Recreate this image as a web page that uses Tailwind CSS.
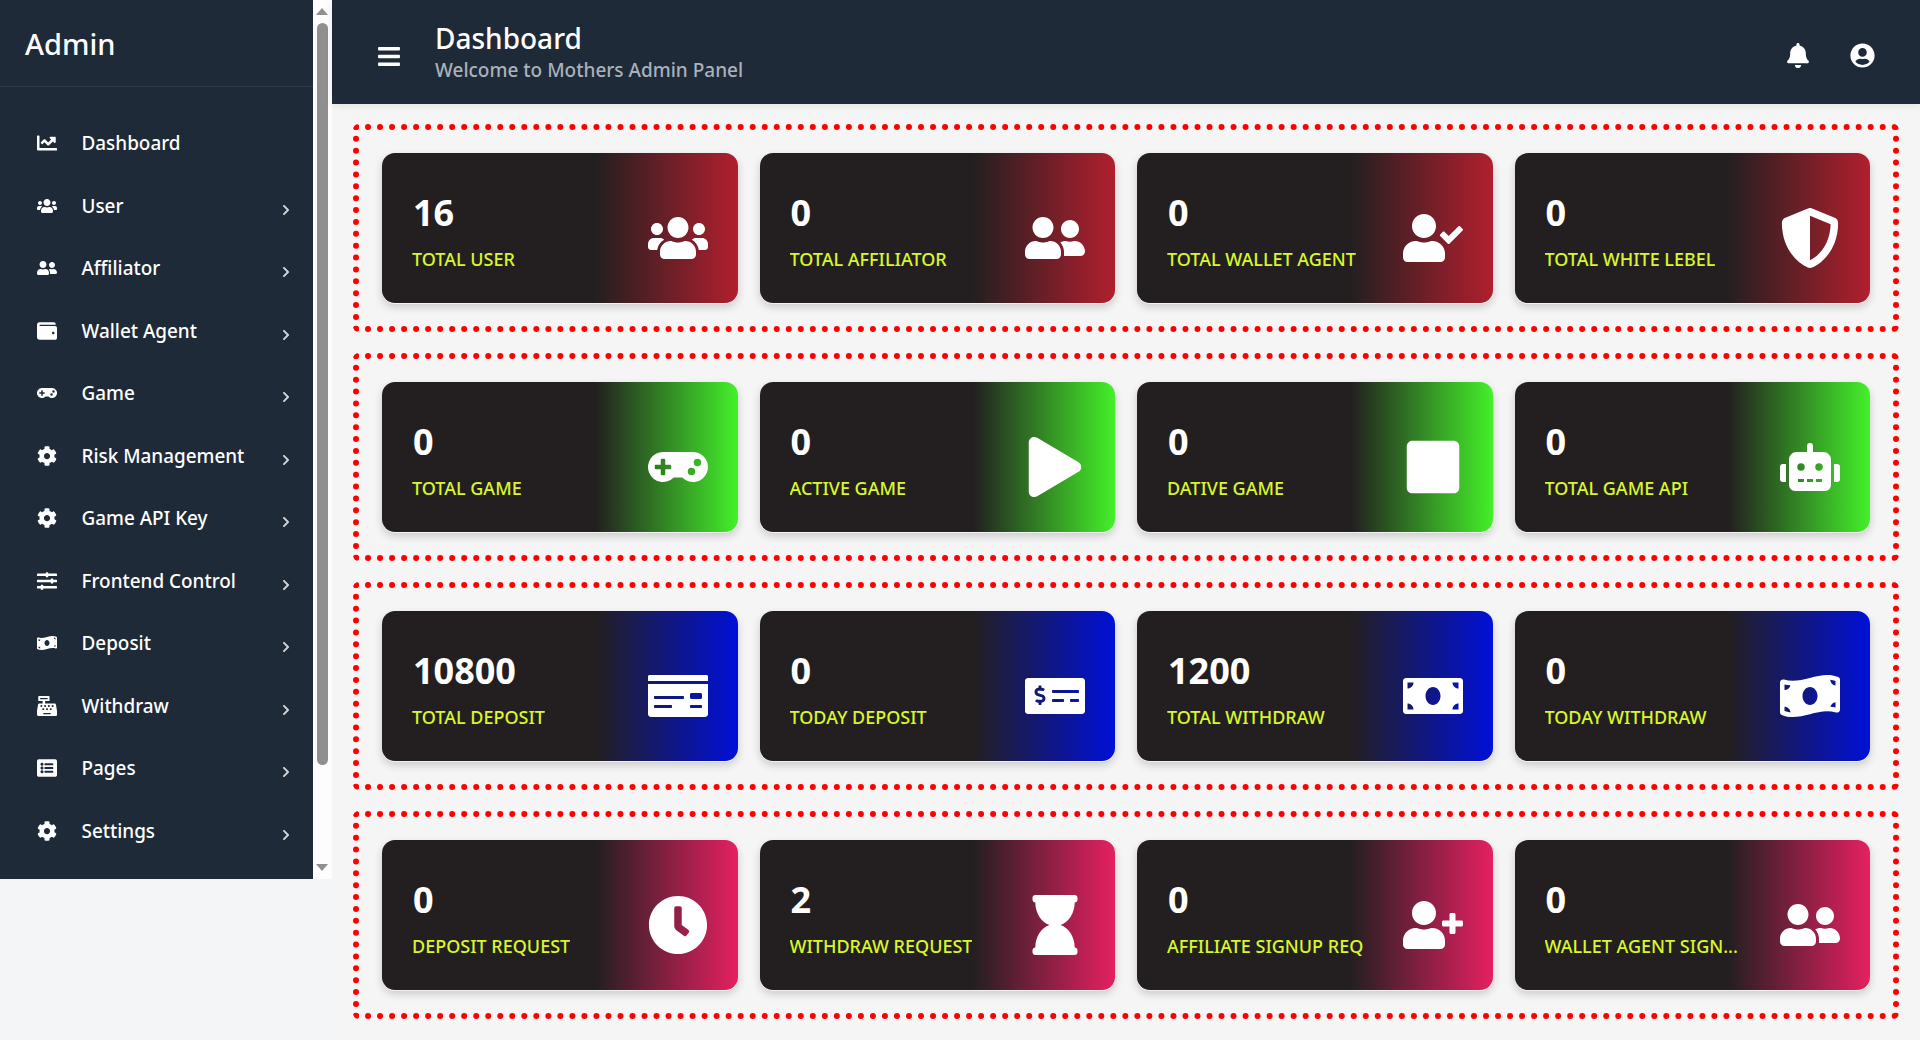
<!DOCTYPE html>
<html lang="en">
<head>
    <meta charset="UTF-8">
    <meta name="viewport" content="width=device-width, initial-scale=1.0">
    <title>Admin Dashboard</title>
    <script src="https://cdn.jsdelivr.net/npm/@tailwindcss/browser@4"></script>
</head>
<body class="bg-[#f4f5f7] font-['Noto_Sans',sans-serif] h-[1040px] overflow-hidden flex">
    <!-- Icon sprites -->
    <svg class="hidden" xmlns="http://www.w3.org/2000/svg">
        <symbol id="i-users" viewBox="0 0 640 512"><path d="M96 224c35.3 0 64-28.7 64-64s-28.7-64-64-64-64 28.7-64 64 28.7 64 64 64zm448 0c35.3 0 64-28.7 64-64s-28.7-64-64-64-64 28.7-64 64 28.7 64 64 64zm32 32h-64c-17.6 0-33.5 7.1-45.1 18.6 40.3 22.1 68.9 62 75.1 109.4h66c17.7 0 32-14.3 32-32v-32c0-35.3-28.7-64-64-64zm-256 0c61.9 0 112-50.1 112-112S381.9 32 320 32 208 82.1 208 144s50.1 112 112 112zm76.8 32h-8.3c-20.8 10-43.9 16-68.5 16s-47.6-6-68.5-16h-8.3C179.6 288 128 339.6 128 403.2V432c0 26.5 21.5 48 48 48h288c26.5 0 48-21.5 48-48v-28.8c0-63.6-51.6-115.2-115.2-115.2zm-223.7-13.4C161.5 263.1 145.6 256 128 256H64c-35.3 0-64 28.7-64 64v32c0 17.7 14.3 32 32 32h65.9c6.3-47.4 34.9-87.3 75.2-109.4z"/></symbol>
        <symbol id="i-friends" viewBox="0 0 640 512"><path d="M192 256c61.9 0 112-50.1 112-112S253.9 32 192 32 80 82.1 80 144s50.1 112 112 112zm76.8 32h-8.3c-20.8 10-43.9 16-68.5 16s-47.6-6-68.5-16h-8.3C51.6 288 0 339.6 0 403.2V432c0 26.5 21.5 48 48 48h288c26.5 0 48-21.5 48-48v-28.8c0-63.6-51.6-115.2-115.2-115.2zM480 256c53 0 96-43 96-96s-43-96-96-96-96 43-96 96 43 96 96 96zm48 32h-3.8c-13.9 4.8-28.6 8-44.2 8s-30.3-3.2-44.2-8H432c-20.4 0-39.2 5.9-55.7 15.4 24.4 26.3 39.7 61.2 39.7 99.8v38.4c0 2.2-.5 4.3-.6 6.4H592c26.5 0 48-21.5 48-48 0-61.9-50.1-112-112-112z"/></symbol>
        <symbol id="i-user-check" viewBox="0 0 640 512"><path d="M224 256c70.7 0 128-57.3 128-128S294.7 0 224 0 96 57.3 96 128s57.3 128 128 128zm89.6 32h-16.7c-22.2 10.2-46.9 16-72.9 16s-50.6-5.8-72.9-16h-16.7C60.2 288 0 348.2 0 422.4V464c0 26.5 21.5 48 48 48h352c26.5 0 48-21.5 48-48v-41.6c0-74.2-60.2-134.4-134.4-134.4zm323-128.4l-27.8-28.1c-4.6-4.7-12.1-4.7-16.8-.1l-104.8 104-45.5-45.8c-4.6-4.7-12.1-4.7-16.8-.1l-28.1 27.9c-4.7 4.6-4.7 12.1-.1 16.8l81.7 82.3c4.6 4.7 12.1 4.7 16.8.1l141.3-140.2c4.6-4.7 4.7-12.2.1-16.8z"/></symbol>
        <symbol id="i-user-plus" viewBox="0 0 640 512"><path d="M624 208h-64v-64c0-8.8-7.2-16-16-16h-32c-8.8 0-16 7.2-16 16v64h-64c-8.8 0-16 7.2-16 16v32c0 8.8 7.2 16 16 16h64v64c0 8.8 7.2 16 16 16h32c8.8 0 16-7.2 16-16v-64h64c8.8 0 16-7.2 16-16v-32c0-8.8-7.2-16-16-16zm-400 48c70.7 0 128-57.3 128-128S294.7 0 224 0 96 57.3 96 128s57.3 128 128 128zm89.6 32h-16.7c-22.2 10.2-46.9 16-72.9 16s-50.6-5.8-72.9-16h-16.7C60.2 288 0 348.2 0 422.4V464c0 26.5 21.5 48 48 48h352c26.5 0 48-21.5 48-48v-41.6c0-74.2-60.2-134.4-134.4-134.4z"/></symbol>
        <symbol id="i-shield" viewBox="0 0 512 512"><path d="M466.5 83.7l-192-80a48.15 48.15 0 0 0-36.9 0l-192 80C27.7 91.1 16 108.6 16 128c0 198.5 114.5 335.7 221.5 380.3 11.8 4.9 25.1 4.9 36.9 0C360.1 472.6 496 349.3 496 128c0-19.4-11.7-36.9-29.5-44.3zM256.1 446.3l-.1-381 175.9 73.3c-3.3 151.4-82.1 261.1-175.8 307.7z"/></symbol>
        <symbol id="i-gamepad" viewBox="0 0 640 512"><path d="M480.07 96H160a160 160 0 1 0 114.24 272h91.52A160 160 0 1 0 480.07 96zM248 268a12 12 0 0 1-12 12h-52v52a12 12 0 0 1-12 12h-24a12 12 0 0 1-12-12v-52H84a12 12 0 0 1-12-12v-24a12 12 0 0 1 12-12h52v-52a12 12 0 0 1 12-12h24a12 12 0 0 1 12 12v52h52a12 12 0 0 1 12 12zm216 76a40 40 0 1 1 40-40 40 40 0 0 1-40 40zm64-96a40 40 0 1 1 40-40 40 40 0 0 1-40 40z"/></symbol>
        <symbol id="i-play" viewBox="0 0 448 512"><path d="M424.4 214.7L72.4 6.6C43.8-10.3 0 6.1 0 47.9V464c0 37.5 40.7 60.1 72.4 41.3l352-208c31.4-18.5 31.5-64.1 0-82.6z"/></symbol>
        <symbol id="i-stop" viewBox="0 0 448 512"><path d="M400 32H48C21.5 32 0 53.5 0 80v352c0 26.5 21.5 48 48 48h352c26.5 0 48-21.5 48-48V80c0-26.5-21.5-48-48-48z"/></symbol>
        <symbol id="i-robot" viewBox="0 0 640 512"><path d="M32,224H64V416H32A31.96166,31.96166,0,0,1,0,384V256A31.96166,31.96166,0,0,1,32,224Zm512-48V448a64.06328,64.06328,0,0,1-64,64H160a64.06328,64.06328,0,0,1-64-64V176a79.974,79.974,0,0,1,80-80H288V32a32,32,0,0,1,64,0V96H464A79.974,79.974,0,0,1,544,176ZM264,256a40,40,0,1,0-40,40A39.997,39.997,0,0,0,264,256Zm-8,128H192v32h64Zm96,0H288v32h64ZM456,256a40,40,0,1,0-40,40A39.997,39.997,0,0,0,456,256Zm-8,128H384v32h64ZM640,256V384a31.96166,31.96166,0,0,1-32,32H576V224h32A31.96166,31.96166,0,0,1,640,256Z"/></symbol>
        <symbol id="i-money-check" viewBox="0 0 640 512"><path d="M0 448c0 17.67 14.33 32 32 32h576c17.67 0 32-14.33 32-32V128H0v320zm448-208c0-8.84 7.16-16 16-16h96c8.84 0 16 7.16 16 16v32c0 8.84-7.16 16-16 16h-96c-8.84 0-16-7.16-16-16v-32zm0 120c0-4.42 3.58-8 8-8h112c4.42 0 8 3.58 8 8v16c0 4.42-3.58 8-8 8H456c-4.42 0-8-3.58-8-8v-16zM64 264c0-4.42 3.58-8 8-8h304c4.42 0 8 3.58 8 8v16c0 4.42-3.58 8-8 8H72c-4.42 0-8-3.58-8-8v-16zm0 96c0-4.42 3.58-8 8-8h176c4.42 0 8 3.58 8 8v16c0 4.42-3.58 8-8 8H72c-4.42 0-8-3.58-8-8v-16zM624 32H16C7.16 32 0 39.16 0 48v48h640V48c0-8.84-7.16-16-16-16z"/></symbol>
        <symbol id="i-money-check-alt" viewBox="0 0 640 512"><path d="M608 64H32C14.33 64 0 78.33 0 96v320c0 17.67 14.33 32 32 32h576c17.67 0 32-14.33 32-32V96c0-17.67-14.33-32-32-32zM176 327.88V344c0 4.42-3.58 8-8 8h-16c-4.42 0-8-3.58-8-8v-16.29c-11.29-.58-22.27-4.52-31.37-11.35-3.9-2.93-4.1-8.77-.57-12.14l11.75-11.21c2.77-2.64 6.89-2.76 10.13-.73 3.87 2.42 8.26 3.72 12.82 3.72h28.11c6.5 0 11.8-5.92 11.8-13.19 0-5.95-3.61-11.19-8.77-12.73l-45-13.5c-18.59-5.58-31.58-23.42-31.58-43.39 0-24.52 19.05-44.44 42.67-45.07V152c0-4.42 3.58-8 8-8h16c4.42 0 8 3.58 8 8v16.29c11.29.58 22.27 4.51 31.37 11.35 3.9 2.93 4.1 8.77.57 12.14l-11.75 11.21c-2.77 2.64-6.89 2.76-10.13.73-3.87-2.43-8.26-3.72-12.82-3.72h-28.11c-6.5 0-11.8 5.92-11.8 13.19 0 5.95 3.61 11.19 8.77 12.73l45 13.5c18.59 5.58 31.58 23.42 31.58 43.39 0 24.53-19.05 44.44-42.67 45.07zM416 312c0 4.42-3.58 8-8 8H296c-4.42 0-8-3.58-8-8v-16c0-4.42 3.58-8 8-8h112c4.42 0 8 3.58 8 8v16zm160 0c0 4.42-3.58 8-8 8h-80c-4.42 0-8-3.58-8-8v-16c0-4.42 3.58-8 8-8h80c4.42 0 8 3.58 8 8v16zm0-96c0 4.42-3.58 8-8 8H296c-4.42 0-8-3.58-8-8v-16c0-4.42 3.58-8 8-8h272c4.42 0 8 3.58 8 8v16z"/></symbol>
        <symbol id="i-bill" viewBox="0 0 640 512"><path d="M608 64H32C14.33 64 0 78.33 0 96v320c0 17.67 14.33 32 32 32h576c17.67 0 32-14.33 32-32V96c0-17.67-14.33-32-32-32zM48 400v-64c35.35 0 64 28.65 64 64H48zm0-224v-64h64c0 35.35-28.65 64-64 64zm272 176c-44.19 0-80-42.99-80-96 0-53.02 35.82-96 80-96s80 42.98 80 96c0 53.03-35.83 96-80 96zm272 48h-64c0-35.35 28.65-64 64-64v64zm0-224c-35.35 0-64-28.65-64-64h64v64z"/></symbol>
        <symbol id="i-bill-wave" viewBox="0 0 640 512"><path d="M621.16 54.46C582.37 38.19 543.55 32 504.75 32c-123.17-.01-246.33 62.34-369.5 62.34-30.89 0-61.76-3.92-92.65-13.72-3.47-1.1-6.95-1.62-10.35-1.62C15.04 79 0 92.32 0 110.81v317.26c0 12.63 7.23 24.6 18.84 29.46C57.63 473.81 96.45 480 135.25 480c123.17 0 246.34-62.35 369.51-62.35 30.89 0 61.76 3.92 92.65 13.72 3.47 1.1 6.95 1.62 10.35 1.62 17.21 0 32.25-13.32 32.25-31.81V83.93c-.01-12.64-7.24-24.6-18.85-29.47zM48 132.22c20.12 5.04 41.12 7.57 62.72 8.93C104.84 170.54 79 192.69 48 192.69v-60.47zm0 285v-47.78c34.37 0 62.18 27.27 63.71 61.4-22.53-1.81-43.59-6.31-63.71-13.62zM320 352c-44.19 0-80-42.99-80-96 0-53.02 35.82-96 80-96s80 42.98 80 96c0 53.03-35.83 96-80 96zm272 27.78c-17.52-4.39-35.71-6.85-54.32-8.44 5.87-26.08 27.5-45.88 54.32-49.28v57.72zm0-236.11c-30.89-3.91-54.86-29.7-55.81-61.55 19.54 2.17 38.09 6.23 55.81 12.66v48.89z"/></symbol>
        <symbol id="i-clock" viewBox="0 0 512 512"><path d="M256,8C119,8,8,119,8,256S119,504,256,504,504,393,504,256,393,8,256,8Zm92.49,313h0l-20,25a16,16,0,0,1-22.49,2.5h0l-67-49.72a40,40,0,0,1-15-31.23V112a16,16,0,0,1,16-16h32a16,16,0,0,1,16,16V256l58,42.5A16,16,0,0,1,348.49,321Z"/></symbol>
        <symbol id="i-hourglass" viewBox="0 0 384 512"><path d="M360 0H24C10.745 0 0 10.745 0 24v16c0 13.255 10.745 24 24 24 0 90.965 51.016 167.734 120.842 192C74.016 280.266 24 357.035 24 448c-13.255 0-24 10.745-24 24v16c0 13.255 10.745 24 24 24h336c13.255 0 24-10.745 24-24v-16c0-13.255-10.745-24-24-24 0-90.965-51.016-167.734-120.842-192C308.984 231.734 360 154.965 360 64c13.255 0 24-10.745 24-24V24c0-13.255-10.745-24-24-24z"/></symbol>
        <symbol id="i-chart" viewBox="0 0 512 512"><path d="M496 384H64V80c0-8.84-7.16-16-16-16H16C7.16 64 0 71.16 0 80v336c0 17.67 14.33 32 32 32h464c8.84 0 16-7.16 16-16v-32c0-8.84-7.16-16-16-16zM464 96H345.94c-21.38 0-32.09 25.85-16.97 40.97l32.4 32.4L288 242.75l-73.37-73.37c-12.5-12.5-32.76-12.5-45.25 0l-68.69 68.69c-6.25 6.25-6.25 16.38 0 22.63l22.62 22.62c6.25 6.25 16.38 6.25 22.63 0L192 237.25l73.37 73.37c12.5 12.5 32.76 12.5 45.25 0l96-96 32.4 32.4c15.12 15.12 40.97 4.41 40.97-16.97V112c.01-8.84-7.15-16-15.99-16z"/></symbol>
        <symbol id="i-wallet" viewBox="0 0 512 512"><path d="M461.2 128H80c-8.84 0-16-7.16-16-16s7.16-16 16-16h384c8.84 0 16-7.16 16-16 0-26.51-21.49-48-48-48H64C28.65 32 0 60.65 0 96v320c0 35.35 28.65 64 64 64h397.2c28.02 0 50.8-21.53 50.8-48V176c0-26.47-22.78-48-50.8-48zM416 336c-17.67 0-32-14.33-32-32s14.33-32 32-32 32 14.33 32 32-14.33 32-32 32z"/></symbol>
        <symbol id="i-cog" viewBox="0 0 512 512"><path d="M487.4 315.7l-42.6-24.6c4.3-23.2 4.3-47 0-70.2l42.6-24.6c4.9-2.8 7.1-8.6 5.5-14-11.1-35.6-30-67.8-54.7-94.6-3.8-4.1-10-5.1-14.8-2.3L380.8 110c-17.9-15.4-38.5-27.3-60.8-35.1V25.8c0-5.6-3.9-10.5-9.4-11.7-36.7-8.2-74.3-7.8-109.2 0-5.5 1.2-9.4 6.1-9.4 11.7V75c-22.2 7.9-42.8 19.8-60.8 35.1L88.7 85.5c-4.9-2.8-11-1.9-14.8 2.3-24.7 26.7-43.6 58.9-54.7 94.6-1.7 5.4.6 11.2 5.5 14L67.3 221c-4.3 23.2-4.3 47 0 70.2l-42.6 24.6c-4.9 2.8-7.1 8.6-5.5 14 11.1 35.6 30 67.8 54.7 94.6 3.8 4.1 10 5.1 14.8 2.3l42.6-24.6c17.9 15.4 38.5 27.3 60.8 35.1v49.2c0 5.6 3.9 10.5 9.4 11.7 36.7 8.2 74.3 7.8 109.2 0 5.5-1.2 9.4-6.1 9.4-11.7v-49.2c22.2-7.9 42.8-19.8 60.8-35.1l42.6 24.6c4.9 2.8 11 1.9 14.8-2.3 24.7-26.7 43.6-58.9 54.7-94.6 1.5-5.5-.7-11.3-5.6-14.1zM256 336c-44.1 0-80-35.9-80-80s35.9-80 80-80 80 35.9 80 80-35.9 80-80 80z"/></symbol>
        <symbol id="i-sliders" viewBox="0 0 512 512"><path d="M496 384H160v-16c0-8.8-7.2-16-16-16h-32c-8.8 0-16 7.2-16 16v16H16c-8.8 0-16 7.2-16 16v32c0 8.8 7.2 16 16 16h80v16c0 8.8 7.2 16 16 16h32c8.8 0 16-7.2 16-16v-16h336c8.8 0 16-7.2 16-16v-32c0-8.8-7.2-16-16-16zm0-160h-80v-16c0-8.8-7.2-16-16-16h-32c-8.8 0-16 7.2-16 16v16H16c-8.8 0-16 7.2-16 16v32c0 8.8 7.2 16 16 16h336v16c0 8.8 7.2 16 16 16h32c8.8 0 16-7.2 16-16v-16h80c8.8 0 16-7.2 16-16v-32c0-8.8-7.2-16-16-16zm0-160H288V48c0-8.8-7.2-16-16-16h-32c-8.8 0-16 7.2-16 16v16H16C7.2 64 0 71.2 0 80v32c0 8.8 7.2 16 16 16h208v16c0 8.8 7.2 16 16 16h32c8.8 0 16-7.2 16-16v-16h208c8.8 0 16-7.2 16-16V80c0-8.8-7.2-16-16-16z"/></symbol>
        <symbol id="i-register" viewBox="0 0 512 512"><path d="M511.1 378.8l-26.7-160c-2.6-15.4-15.9-26.7-31.6-26.7H208v-64h96c8.8 0 16-7.2 16-16V16c0-8.8-7.2-16-16-16H48c-8.8 0-16 7.2-16 16v96c0 8.8 7.2 16 16 16h96v64H59.1c-15.6 0-29 11.3-31.6 26.7L.8 378.7c-.6 3.5-.9 7-.9 10.5V480c0 17.7 14.3 32 32 32h448c17.7 0 32-14.3 32-32v-90.7c.1-3.5-.2-7-.8-10.5zM280 248c0-8.8 7.2-16 16-16h16c8.8 0 16 7.2 16 16v16c0 8.8-7.2 16-16 16h-16c-8.8 0-16-7.2-16-16v-16zm-32 64h16c8.8 0 16 7.2 16 16v16c0 8.8-7.2 16-16 16h-16c-8.8 0-16-7.2-16-16v-16c0-8.8 7.2-16 16-16zm-32-80c8.8 0 16 7.2 16 16v16c0 8.8-7.2 16-16 16h-16c-8.8 0-16-7.2-16-16v-16c0-8.8 7.2-16 16-16h16zM80 80V48h192v32H80zm40 200h-16c-8.8 0-16-7.2-16-16v-16c0-8.8 7.2-16 16-16h16c8.8 0 16 7.2 16 16v16c0 8.8-7.2 16-16 16zm16 64v-16c0-8.8 7.2-16 16-16h16c8.8 0 16 7.2 16 16v16c0 8.8-7.2 16-16 16h-16c-8.8 0-16-7.2-16-16zm216 112c0 4.4-3.6 8-8 8H168c-4.4 0-8-3.6-8-8v-16c0-4.4 3.6-8 8-8h176c4.4 0 8 3.6 8 8v16zm24-112c0 8.8-7.2 16-16 16h-16c-8.8 0-16-7.2-16-16v-16c0-8.8 7.2-16 16-16h16c8.8 0 16 7.2 16 16v16zm48-80c0 8.8-7.2 16-16 16h-16c-8.8 0-16-7.2-16-16v-16c0-8.8 7.2-16 16-16h16c8.8 0 16 7.2 16 16v16z"/></symbol>
        <symbol id="i-list" viewBox="0 0 512 512"><path d="M464 480H48c-26.51 0-48-21.49-48-48V80c0-26.51 21.49-48 48-48h416c26.51 0 48 21.49 48 48v352c0 26.51-21.49 48-48 48zM128 120c-22.091 0-40 17.909-40 40s17.909 40 40 40 40-17.909 40-40-17.909-40-40-40zm0 96c-22.091 0-40 17.909-40 40s17.909 40 40 40 40-17.909 40-40-17.909-40-40-40zm0 96c-22.091 0-40 17.909-40 40s17.909 40 40 40 40-17.909 40-40-17.909-40-40-40zm288-136v-32c0-6.627-5.373-12-12-12H204c-6.627 0-12 5.373-12 12v32c0 6.627 5.373 12 12 12h200c6.627 0 12-5.373 12-12zm0 96v-32c0-6.627-5.373-12-12-12H204c-6.627 0-12 5.373-12 12v32c0 6.627 5.373 12 12 12h200c6.627 0 12-5.373 12-12zm0 96v-32c0-6.627-5.373-12-12-12H204c-6.627 0-12 5.373-12 12v32c0 6.627 5.373 12 12 12h200c6.627 0 12-5.373 12-12z"/></symbol>
        <symbol id="i-bell" viewBox="0 0 448 512"><path d="M224 512c35.32 0 63.97-28.65 63.97-64H160.03c0 35.35 28.65 64 63.97 64zm215.39-149.71c-19.32-20.76-55.47-51.99-55.47-154.29 0-77.7-54.48-139.9-127.94-155.16V32c0-17.67-14.32-32-31.98-32s-31.98 14.33-31.98 32v20.84C118.56 68.1 64.08 130.3 64.08 208c0 102.3-36.15 133.53-55.47 154.29-6 6.45-8.66 14.16-8.61 21.71.11 16.4 12.98 32 32.1 32h383.8c19.12 0 32-15.6 32.1-32 .05-7.55-2.61-15.27-8.61-21.71z"/></symbol>
        <symbol id="i-user-circle" viewBox="0 0 496 512"><path d="M248 8C111 8 0 119 0 256s111 248 248 248 248-111 248-248S385 8 248 8zm0 96c48.6 0 88 39.4 88 88s-39.4 88-88 88-88-39.4-88-88 39.4-88 88-88zm0 344c-58.7 0-111.3-26.6-146.5-68.2 18.8-35.4 55.6-59.8 98.5-59.8 2.4 0 4.8.4 7.1 1.1 13 4.2 26.6 6.9 40.9 6.9 14.3 0 28-2.7 40.9-6.9 2.3-.7 4.7-1.1 7.1-1.1 42.9 0 79.7 24.4 98.5 59.8C359.3 421.4 306.7 448 248 448z"/></symbol>
        <symbol id="i-chevron" viewBox="0 0 320 512"><path d="M285.476 272.971L91.132 467.314c-9.373 9.373-24.569 9.373-33.941 0l-22.667-22.667c-9.357-9.357-9.375-24.522-.04-33.901L188.505 256 34.484 101.255c-9.335-9.379-9.317-24.544.04-33.901l22.667-22.667c9.373-9.373 24.569-9.373 33.941 0L285.475 239.03c9.373 9.372 9.373 24.568.001 33.941z"/></symbol>
        <symbol id="i-bars" viewBox="0 0 448 512"><path d="M16 132h416c8.837 0 16-7.163 16-16V76c0-8.837-7.163-16-16-16H16C7.163 60 0 67.163 0 76v40c0 8.837 7.163 16 16 16zm0 160h416c8.837 0 16-7.163 16-16v-40c0-8.837-7.163-16-16-16H16c-8.837 0-16 7.163-16 16v40c0 8.837 7.163 16 16 16zm0 160h416c8.837 0 16-7.163 16-16v-40c0-8.837-7.163-16-16-16H16c-8.837 0-16 7.163-16 16v40c0 8.837 7.163 16 16 16z"/></symbol>
    </svg>

    <!-- Sidebar with its scrollbar -->
    <div class="w-[332px] h-[879px] shrink-0 flex">
        <aside class="w-[313px] bg-[#1e2a38] text-white">
            <div class="h-[87px] pl-[25px] flex items-center border-b border-[#2f3b4a] text-[29px] font-medium pt-[2px]">Admin</div>
            <nav class="pt-[25px] text-[18.9px] font-medium">
                <a class="h-[62.5px] flex items-center pl-[37px]"><svg class="w-5 h-5 fill-white"><use href="#i-chart"/></svg><span class="ml-[24.5px]">Dashboard</span></a>
                <a class="h-[62.5px] flex items-center pl-[37px]"><svg class="w-5 h-5 fill-white"><use href="#i-users"/></svg><span class="ml-[24.5px]">User</span><svg class="ml-auto mr-[23.5px] mt-2 w-2 h-3 fill-white/80"><use href="#i-chevron"/></svg></a>
                <a class="h-[62.5px] flex items-center pl-[37px]"><svg class="w-5 h-5 fill-white"><use href="#i-friends"/></svg><span class="ml-[24.5px]">Affiliator</span><svg class="ml-auto mr-[23.5px] mt-2 w-2 h-3 fill-white/80"><use href="#i-chevron"/></svg></a>
                <a class="h-[62.5px] flex items-center pl-[37px]"><svg class="w-5 h-5 fill-white"><use href="#i-wallet"/></svg><span class="ml-[24.5px]">Wallet Agent</span><svg class="ml-auto mr-[23.5px] mt-2 w-2 h-3 fill-white/80"><use href="#i-chevron"/></svg></a>
                <a class="h-[62.5px] flex items-center pl-[37px]"><svg class="w-5 h-5 fill-white"><use href="#i-gamepad"/></svg><span class="ml-[24.5px]">Game</span><svg class="ml-auto mr-[23.5px] mt-2 w-2 h-3 fill-white/80"><use href="#i-chevron"/></svg></a>
                <a class="h-[62.5px] flex items-center pl-[37px]"><svg class="w-5 h-5 fill-white"><use href="#i-cog"/></svg><span class="ml-[24.5px]">Risk Management</span><svg class="ml-auto mr-[23.5px] mt-2 w-2 h-3 fill-white/80"><use href="#i-chevron"/></svg></a>
                <a class="h-[62.5px] flex items-center pl-[37px]"><svg class="w-5 h-5 fill-white"><use href="#i-cog"/></svg><span class="ml-[24.5px]">Game API Key</span><svg class="ml-auto mr-[23.5px] mt-2 w-2 h-3 fill-white/80"><use href="#i-chevron"/></svg></a>
                <a class="h-[62.5px] flex items-center pl-[37px]"><svg class="w-5 h-5 fill-white"><use href="#i-sliders"/></svg><span class="ml-[24.5px]">Frontend Control</span><svg class="ml-auto mr-[23.5px] mt-2 w-2 h-3 fill-white/80"><use href="#i-chevron"/></svg></a>
                <a class="h-[62.5px] flex items-center pl-[37px]"><svg class="w-5 h-5 fill-white"><use href="#i-bill-wave"/></svg><span class="ml-[24.5px]">Deposit</span><svg class="ml-auto mr-[23.5px] mt-2 w-2 h-3 fill-white/80"><use href="#i-chevron"/></svg></a>
                <a class="h-[62.5px] flex items-center pl-[37px]"><svg class="w-5 h-5 fill-white"><use href="#i-register"/></svg><span class="ml-[24.5px]">Withdraw</span><svg class="ml-auto mr-[23.5px] mt-2 w-2 h-3 fill-white/80"><use href="#i-chevron"/></svg></a>
                <a class="h-[62.5px] flex items-center pl-[37px]"><svg class="w-5 h-5 fill-white"><use href="#i-list"/></svg><span class="ml-[24.5px]">Pages</span><svg class="ml-auto mr-[23.5px] mt-2 w-2 h-3 fill-white/80"><use href="#i-chevron"/></svg></a>
                <a class="h-[62.5px] flex items-center pl-[37px]"><svg class="w-5 h-5 fill-white"><use href="#i-cog"/></svg><span class="ml-[24.5px]">Settings</span><svg class="ml-auto mr-[23.5px] mt-2 w-2 h-3 fill-white/80"><use href="#i-chevron"/></svg></a>
            </nav>
        </aside>
        <!-- Scrollbar -->
        <div class="w-[19px] bg-[#fdfdfd] flex flex-col items-center pt-2 pr-[1px]">
            <div class="w-0 h-0 border-x-[6.5px] border-x-transparent border-b-[7px] border-b-[#8f8f8f]"></div>
            <div class="w-[11px] h-[742px] mt-[8px] bg-[#8f8f8f] rounded-[6px]"></div>
            <div class="w-0 h-0 mt-[99px] border-x-[6.5px] border-x-transparent border-t-[7px] border-t-[#8f8f8f]"></div>
        </div>
    </div>

    <div class="flex-1 flex flex-col bg-[#f5f5f5]">
        <!-- Header -->
        <header class="h-[104px] shrink-0 bg-[#1e2a38] text-white flex items-center pl-[46px] pr-[45px] shadow-[0_2px_8px_rgba(0,0,0,0.08)]">
            <svg class="w-[22px] h-[25px] fill-white mt-[8px]"><use href="#i-bars"/></svg>
            <div class="ml-[35px] -mt-[1px]">
                <h1 class="text-[28px] leading-[36px] mb-[1px] font-medium">Dashboard</h1>
                <p class="text-[19px] leading-[26px] font-medium text-[#a9b1ba]">Welcome to Mothers Admin Panel</p>
            </div>
            <svg class="ml-auto w-[22px] h-[25px] fill-white mt-[7px]"><use href="#i-bell"/></svg>
            <svg class="ml-[41.5px] w-[25px] h-[25px] fill-white mt-[7px]"><use href="#i-user-circle"/></svg>
        </header>

        <main class="flex-1 pt-5 px-[21px] flex flex-col gap-[21px]">
            <!-- Users -->
            <section class="h-[208px] border-[6px] border-dotted border-[#ff0000] rounded-[6px] p-[23px] grid grid-cols-4 gap-x-[22px] content-start">
                <div class="h-[150px] rounded-[13px] bg-linear-to-r/srgb from-[#231f20] from-60% to-[#b11f2e] shadow-[0_1px_0_rgba(255,255,255,0.7),0_4px_8px_rgba(0,0,0,0.18)] flex justify-between pt-[30px] px-[30px]">
                    <div class="min-w-0"><div class="ml-px text-[36px] leading-[60px] font-bold text-white">16</div><div class="mt-[3px] text-[18px] leading-[26px] font-medium text-[#d9f72c] truncate">TOTAL USER</div></div>
                    <svg class="w-[60px] h-[60px] mt-[25px] shrink-0 fill-white"><use href="#i-users"/></svg>
                </div>
                <div class="h-[150px] rounded-[13px] bg-linear-to-r/srgb from-[#231f20] from-60% to-[#b11f2e] shadow-[0_1px_0_rgba(255,255,255,0.7),0_4px_8px_rgba(0,0,0,0.18)] flex justify-between pt-[30px] px-[30px]">
                    <div class="min-w-0"><div class="ml-px text-[36px] leading-[60px] font-bold text-white">0</div><div class="mt-[3px] text-[18px] leading-[26px] font-medium text-[#d9f72c] truncate">TOTAL AFFILIATOR</div></div>
                    <svg class="w-[60px] h-[60px] mt-[25px] shrink-0 fill-white"><use href="#i-friends"/></svg>
                </div>
                <div class="h-[150px] rounded-[13px] bg-linear-to-r/srgb from-[#231f20] from-60% to-[#b11f2e] shadow-[0_1px_0_rgba(255,255,255,0.7),0_4px_8px_rgba(0,0,0,0.18)] flex justify-between pt-[30px] px-[30px]">
                    <div class="min-w-0"><div class="ml-px text-[36px] leading-[60px] font-bold text-white">0</div><div class="mt-[3px] text-[18px] leading-[26px] font-medium text-[#d9f72c] truncate">TOTAL WALLET AGENT</div></div>
                    <svg class="w-[60px] h-[60px] mt-[25px] shrink-0 fill-white"><use href="#i-user-check"/></svg>
                </div>
                <div class="h-[150px] rounded-[13px] bg-linear-to-r/srgb from-[#231f20] from-60% to-[#b11f2e] shadow-[0_1px_0_rgba(255,255,255,0.7),0_4px_8px_rgba(0,0,0,0.18)] flex justify-between pt-[30px] px-[30px]">
                    <div class="min-w-0"><div class="ml-px text-[36px] leading-[60px] font-bold text-white">0</div><div class="mt-[3px] text-[18px] leading-[26px] font-medium text-[#d9f72c] truncate">TOTAL WHITE LEBEL</div></div>
                    <svg class="w-[60px] h-[60px] mt-[25px] shrink-0 fill-white"><use href="#i-shield"/></svg>
                </div>
            </section>

            <!-- Games -->
            <section class="h-[208px] border-[6px] border-dotted border-[#ff0000] rounded-[6px] p-[23px] grid grid-cols-4 gap-x-[22px] content-start">
                <div class="h-[150px] rounded-[13px] bg-linear-to-r/srgb from-[#231f20] from-60% to-[#44f02a] shadow-[0_1px_0_rgba(255,255,255,0.7),0_4px_8px_rgba(0,0,0,0.18)] flex justify-between pt-[30px] px-[30px]">
                    <div class="min-w-0"><div class="ml-px text-[36px] leading-[60px] font-bold text-white">0</div><div class="mt-[3px] text-[18px] leading-[26px] font-medium text-[#d9f72c] truncate">TOTAL GAME</div></div>
                    <svg class="w-[60px] h-[60px] mt-[25px] shrink-0 fill-white"><use href="#i-gamepad"/></svg>
                </div>
                <div class="h-[150px] rounded-[13px] bg-linear-to-r/srgb from-[#231f20] from-60% to-[#44f02a] shadow-[0_1px_0_rgba(255,255,255,0.7),0_4px_8px_rgba(0,0,0,0.18)] flex justify-between pt-[30px] px-[30px]">
                    <div class="min-w-0"><div class="ml-px text-[36px] leading-[60px] font-bold text-white">0</div><div class="mt-[3px] text-[18px] leading-[26px] font-medium text-[#d9f72c] truncate">ACTIVE GAME</div></div>
                    <svg class="w-[60px] h-[60px] mt-[25px] shrink-0 fill-white"><use href="#i-play"/></svg>
                </div>
                <div class="h-[150px] rounded-[13px] bg-linear-to-r/srgb from-[#231f20] from-60% to-[#44f02a] shadow-[0_1px_0_rgba(255,255,255,0.7),0_4px_8px_rgba(0,0,0,0.18)] flex justify-between pt-[30px] px-[30px]">
                    <div class="min-w-0"><div class="ml-px text-[36px] leading-[60px] font-bold text-white">0</div><div class="mt-[3px] text-[18px] leading-[26px] font-medium text-[#d9f72c] truncate">DATIVE GAME</div></div>
                    <svg class="w-[60px] h-[60px] mt-[25px] shrink-0 fill-white"><use href="#i-stop"/></svg>
                </div>
                <div class="h-[150px] rounded-[13px] bg-linear-to-r/srgb from-[#231f20] from-60% to-[#44f02a] shadow-[0_1px_0_rgba(255,255,255,0.7),0_4px_8px_rgba(0,0,0,0.18)] flex justify-between pt-[30px] px-[30px]">
                    <div class="min-w-0"><div class="ml-px text-[36px] leading-[60px] font-bold text-white">0</div><div class="mt-[3px] text-[18px] leading-[26px] font-medium text-[#d9f72c] truncate">TOTAL GAME API</div></div>
                    <svg class="w-[60px] h-[60px] mt-[25px] shrink-0 fill-white"><use href="#i-robot"/></svg>
                </div>
            </section>

            <!-- Money -->
            <section class="h-[208px] border-[6px] border-dotted border-[#ff0000] rounded-[6px] p-[23px] grid grid-cols-4 gap-x-[22px] content-start">
                <div class="h-[150px] rounded-[13px] bg-linear-to-r/srgb from-[#231f20] from-60% to-[#0010d8] shadow-[0_1px_0_rgba(255,255,255,0.7),0_4px_8px_rgba(0,0,0,0.18)] flex justify-between pt-[30px] px-[30px]">
                    <div class="min-w-0"><div class="ml-px text-[36px] leading-[60px] font-bold text-white">10800</div><div class="mt-[3px] text-[18px] leading-[26px] font-medium text-[#d9f72c] truncate">TOTAL DEPOSIT</div></div>
                    <svg class="w-[60px] h-[60px] mt-[25px] shrink-0 fill-white"><use href="#i-money-check"/></svg>
                </div>
                <div class="h-[150px] rounded-[13px] bg-linear-to-r/srgb from-[#231f20] from-60% to-[#0010d8] shadow-[0_1px_0_rgba(255,255,255,0.7),0_4px_8px_rgba(0,0,0,0.18)] flex justify-between pt-[30px] px-[30px]">
                    <div class="min-w-0"><div class="ml-px text-[36px] leading-[60px] font-bold text-white">0</div><div class="mt-[3px] text-[18px] leading-[26px] font-medium text-[#d9f72c] truncate">TODAY DEPOSIT</div></div>
                    <svg class="w-[60px] h-[60px] mt-[25px] shrink-0 fill-white"><use href="#i-money-check-alt"/></svg>
                </div>
                <div class="h-[150px] rounded-[13px] bg-linear-to-r/srgb from-[#231f20] from-60% to-[#0010d8] shadow-[0_1px_0_rgba(255,255,255,0.7),0_4px_8px_rgba(0,0,0,0.18)] flex justify-between pt-[30px] px-[30px]">
                    <div class="min-w-0"><div class="ml-px text-[36px] leading-[60px] font-bold text-white">1200</div><div class="mt-[3px] text-[18px] leading-[26px] font-medium text-[#d9f72c] truncate">TOTAL WITHDRAW</div></div>
                    <svg class="w-[60px] h-[60px] mt-[25px] shrink-0 fill-white"><use href="#i-bill"/></svg>
                </div>
                <div class="h-[150px] rounded-[13px] bg-linear-to-r/srgb from-[#231f20] from-60% to-[#0010d8] shadow-[0_1px_0_rgba(255,255,255,0.7),0_4px_8px_rgba(0,0,0,0.18)] flex justify-between pt-[30px] px-[30px]">
                    <div class="min-w-0"><div class="ml-px text-[36px] leading-[60px] font-bold text-white">0</div><div class="mt-[3px] text-[18px] leading-[26px] font-medium text-[#d9f72c] truncate">TODAY WITHDRAW</div></div>
                    <svg class="w-[60px] h-[60px] mt-[25px] shrink-0 fill-white"><use href="#i-bill-wave"/></svg>
                </div>
            </section>

            <!-- Requests -->
            <section class="h-[208px] border-[6px] border-dotted border-[#ff0000] rounded-[6px] p-[23px] grid grid-cols-4 gap-x-[22px] content-start">
                <div class="h-[150px] rounded-[13px] bg-linear-to-r/srgb from-[#231f20] from-60% to-[#e52061] shadow-[0_1px_0_rgba(255,255,255,0.7),0_4px_8px_rgba(0,0,0,0.18)] flex justify-between pt-[30px] px-[30px]">
                    <div class="min-w-0"><div class="ml-px text-[36px] leading-[60px] font-bold text-white">0</div><div class="mt-[3px] text-[18px] leading-[26px] font-medium text-[#d9f72c] truncate">DEPOSIT REQUEST</div></div>
                    <svg class="w-[60px] h-[60px] mt-[25px] shrink-0 fill-white"><use href="#i-clock"/></svg>
                </div>
                <div class="h-[150px] rounded-[13px] bg-linear-to-r/srgb from-[#231f20] from-60% to-[#e52061] shadow-[0_1px_0_rgba(255,255,255,0.7),0_4px_8px_rgba(0,0,0,0.18)] flex justify-between pt-[30px] px-[30px]">
                    <div class="min-w-0"><div class="ml-px text-[36px] leading-[60px] font-bold text-white">2</div><div class="mt-[3px] text-[18px] leading-[26px] font-medium text-[#d9f72c] truncate">WITHDRAW REQUEST</div></div>
                    <svg class="w-[60px] h-[60px] mt-[25px] shrink-0 fill-white"><use href="#i-hourglass"/></svg>
                </div>
                <div class="h-[150px] rounded-[13px] bg-linear-to-r/srgb from-[#231f20] from-60% to-[#e52061] shadow-[0_1px_0_rgba(255,255,255,0.7),0_4px_8px_rgba(0,0,0,0.18)] flex justify-between pt-[30px] px-[30px]">
                    <div class="min-w-0"><div class="ml-px text-[36px] leading-[60px] font-bold text-white">0</div><div class="mt-[3px] text-[18px] leading-[26px] font-medium text-[#d9f72c] truncate">AFFILIATE SIGNUP REQ</div></div>
                    <svg class="w-[60px] h-[60px] mt-[25px] shrink-0 fill-white"><use href="#i-user-plus"/></svg>
                </div>
                <div class="h-[150px] rounded-[13px] bg-linear-to-r/srgb from-[#231f20] from-60% to-[#e52061] shadow-[0_1px_0_rgba(255,255,255,0.7),0_4px_8px_rgba(0,0,0,0.18)] flex justify-between pt-[30px] px-[30px]">
                    <div class="min-w-0"><div class="ml-px text-[36px] leading-[60px] font-bold text-white">0</div><div class="mt-[3px] text-[18px] leading-[26px] font-medium text-[#d9f72c] truncate">WALLET AGENT SIGN...</div></div>
                    <svg class="w-[60px] h-[60px] mt-[25px] shrink-0 fill-white"><use href="#i-friends"/></svg>
                </div>
            </section>
        </main>
    </div>
</body>
</html>
